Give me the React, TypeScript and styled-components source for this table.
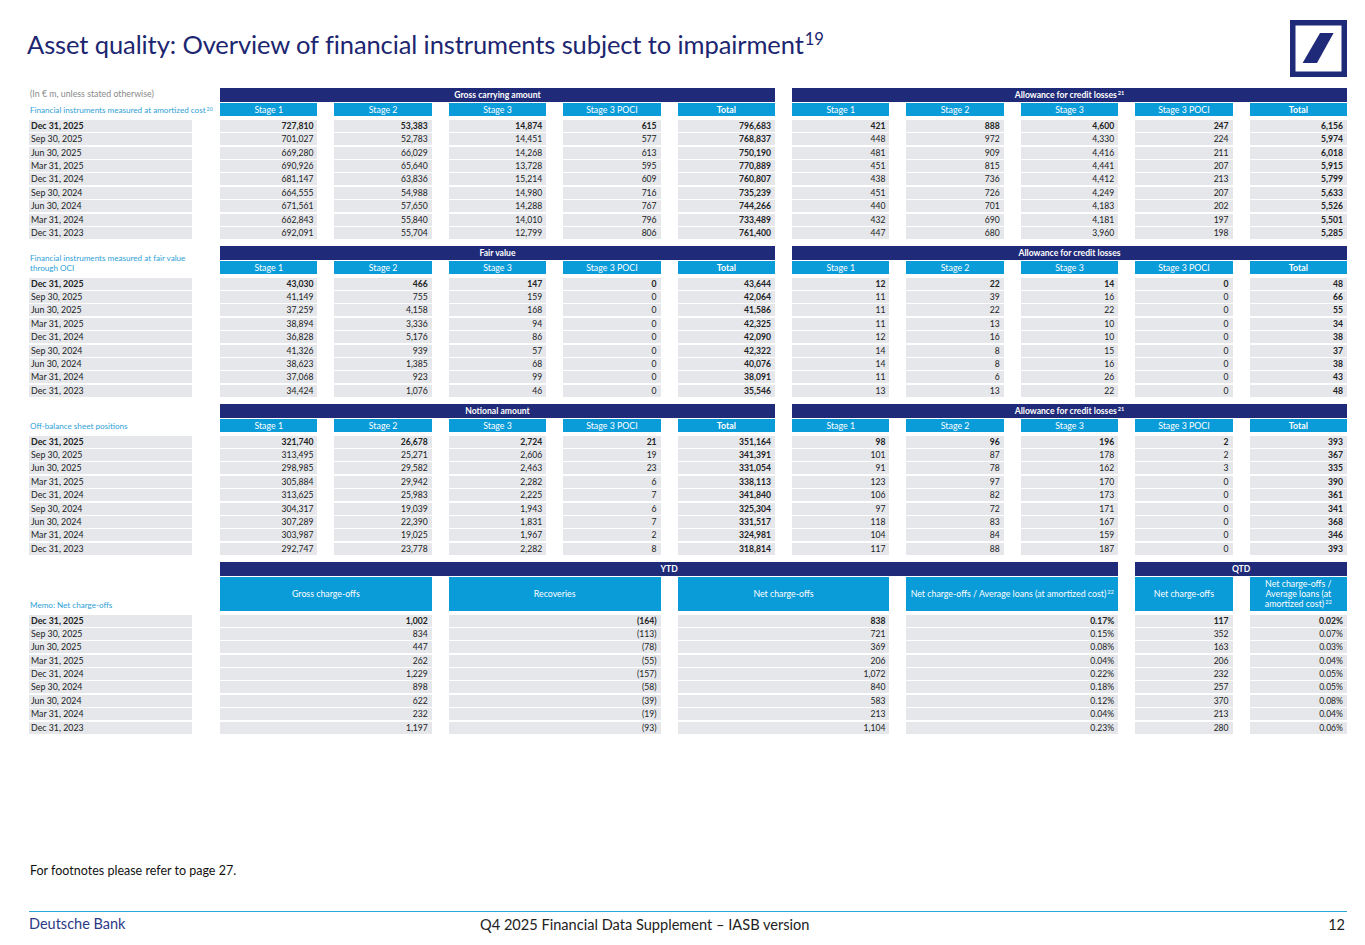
import React from "react";
import styled, { createGlobalStyle, css } from "styled-components";

const NAVY = "#1f2a78";
const SKY = "#0a9bd9";
const ROW = "#e5e7eb";
const LABEL_BLUE = "#2f9fd6";

const GlobalStyle = createGlobalStyle`
  html, body {
    margin: 0;
    padding: 0;
    background: #ffffff;
  }
  body {
    font-family: Lato, "Liberation Sans", Arial, sans-serif;
    color: #222;
  }
`;

const Page = styled.div`
  width: 1365px;
  height: 945px;
  box-sizing: border-box;
  padding: 0 18px 0 29px;
  display: flex;
  flex-direction: column;
  overflow: hidden;
`;

const Header = styled.header`
  height: 88px;
  display: flex;
  justify-content: space-between;
  align-items: flex-start;
  padding-top: 20px;
  box-sizing: border-box;
`;

const Title = styled.h1`
  margin: 9px 0 0 -2px;
  font-family: Lato, "Liberation Sans", sans-serif;
  font-weight: 400;
  font-size: 25.5px;
  line-height: 30px;
  color: #1c2670;
  letter-spacing: -0.1px;
`;

const Sup = styled.sup`
  font-size: 0.65em;
  line-height: 0;
  vertical-align: 0.55em;
  margin-left: 1px;
`;

const Logo = styled.svg`
  display: block;
  width: 57px;
  height: 57px;
`;

const Section = styled.section<{ $memo?: boolean }>`
  display: grid;
  grid-template-columns: 174px repeat(10, 1fr);
  grid-template-rows: 14px ${({ $memo }) => ($memo ? "36px" : "15px")} repeat(9, 12px);
  column-gap: 17px;
  row-gap: 1.4px;
  margin-bottom: 7px;
`;

const LabelBlock = styled.div`
  grid-column: 1;
  grid-row: 1 / span 2;
  align-self: end;
  display: flex;
  flex-direction: column;
  padding: 0 0 3px 1px;
  line-height: 10px;
  white-space: nowrap;
`;

const Note = styled.div`
  color: #8a8a8a;
  font-size: 8.8px;
  margin-bottom: 6px;
`;

const SectionName = styled.div`
  color: ${LABEL_BLUE};
  font-size: 8.1px;
`;

const GroupHead = styled.div<{ $col: number; $span: number }>`
  grid-row: 1;
  grid-column: ${({ $col, $span }) => `${$col} / span ${$span}`};
  background: ${NAVY};
  color: #fff;
  font-weight: 700;
  font-size: 8.6px;
  display: flex;
  align-items: center;
  justify-content: center;
`;

const SubHead = styled.div<{ $col: number; $span: number; $bold?: boolean; $tall?: boolean }>`
  grid-row: 2;
  grid-column: ${({ $col, $span }) => `${$col} / span ${$span}`};
  align-self: start;
  height: ${({ $tall }) => ($tall ? "34px" : "13px")};
  background: ${SKY};
  color: #fff;
  font-size: 8.8px;
  line-height: 10.4px;
  font-weight: ${({ $bold }) => ($bold ? 700 : 400)};
  display: flex;
  align-items: center;
  justify-content: center;
  text-align: center;
  padding: 0 2px;
`;

const DateCell = styled.div<{ $bold?: boolean }>`
  grid-column: 1;
  width: 163px;
  background: ${ROW};
  font-size: 8.8px;
  line-height: 12px;
  padding-left: 2px;
  box-sizing: border-box;
  color: #222;
  font-weight: ${({ $bold }) => ($bold ? 700 : 400)};
`;

const Cell = styled.div<{ $bold?: boolean; $span?: number }>`
  background: ${ROW};
  font-size: 8.6px;
  line-height: 12px;
  text-align: right;
  padding-right: 4px;
  color: #222;
  font-weight: ${({ $bold }) => ($bold ? 700 : 400)};
  ${({ $span }) =>
    $span &&
    css`
      grid-column: span ${$span};
    `}
`;

const Footer = styled.footer`
  margin-top: auto;
  padding-bottom: 12px;
`;

const FootNote = styled.div`
  font-size: 12.5px;
  line-height: 14px;
  color: #111;
  padding-left: 1px;
`;

const Divider = styled.div`
  height: 1px;
  background: #2aa8dc;
  margin: 33px 0 2px;
`;

const BottomBar = styled.div`
  display: grid;
  grid-template-columns: 451px 1fr auto;
  align-items: center;
`;

const Brand = styled.div`
  font-size: 14.5px;
  line-height: 16px;
  color: #2b3a86;
`;

const DocName = styled.div`
  font-size: 14.6px;
  line-height: 16px;
  color: #222;
  padding-top: 3px;
`;

const PageNum = styled.div`
  font-size: 14.5px;
  line-height: 16px;
  color: #222;
  padding: 3px 2px 0 0;
`;

const dates = [
  "Dec 31, 2025",
  "Sep 30, 2025",
  "Jun 30, 2025",
  "Mar 31, 2025",
  "Dec 31, 2024",
  "Sep 30, 2024",
  "Jun 30, 2024",
  "Mar 31, 2024",
  "Dec 31, 2023",
];

const stages = ["Stage 1", "Stage 2", "Stage 3", "Stage 3 POCI", "Total"];

type StageTable = {
  label: React.ReactNode;
  note?: string;
  left: React.ReactNode;
  right: React.ReactNode;
  cols: string[][];
};

const tables: StageTable[] = [
  {
    note: "(In € m, unless stated otherwise)",
    label: (
      <>
        Financial instruments measured at amortized cost<Sup>20</Sup>
      </>
    ),
    left: "Gross carrying amount",
    right: (
      <>
        Allowance for credit losses<Sup>21</Sup>
      </>
    ),
    cols: [
      ["727,810", "701,027", "669,280", "690,926", "681,147", "664,555", "671,561", "662,843", "692,091"],
      ["53,383", "52,783", "66,029", "65,640", "63,836", "54,988", "57,650", "55,840", "55,704"],
      ["14,874", "14,451", "14,268", "13,728", "15,214", "14,980", "14,288", "14,010", "12,799"],
      ["615", "577", "613", "595", "609", "716", "767", "796", "806"],
      ["796,683", "768,837", "750,190", "770,889", "760,807", "735,239", "744,266", "733,489", "761,400"],
      ["421", "448", "481", "451", "438", "451", "440", "432", "447"],
      ["888", "972", "909", "815", "736", "726", "701", "690", "680"],
      ["4,600", "4,330", "4,416", "4,441", "4,412", "4,249", "4,183", "4,181", "3,960"],
      ["247", "224", "211", "207", "213", "207", "202", "197", "198"],
      ["6,156", "5,974", "6,018", "5,915", "5,799", "5,633", "5,526", "5,501", "5,285"],
    ],
  },
  {
    label: (
      <>
        Financial instruments measured at fair value
        <br />
        through OCI
      </>
    ),
    left: "Fair value",
    right: "Allowance for credit losses",
    cols: [
      ["43,030", "41,149", "37,259", "38,894", "36,828", "41,326", "38,623", "37,068", "34,424"],
      ["466", "755", "4,158", "3,336", "5,176", "939", "1,385", "923", "1,076"],
      ["147", "159", "168", "94", "86", "57", "68", "99", "46"],
      ["0", "0", "0", "0", "0", "0", "0", "0", "0"],
      ["43,644", "42,064", "41,586", "42,325", "42,090", "42,322", "40,076", "38,091", "35,546"],
      ["12", "11", "11", "11", "12", "14", "14", "11", "13"],
      ["22", "39", "22", "13", "16", "8", "8", "6", "13"],
      ["14", "16", "22", "10", "10", "15", "16", "26", "22"],
      ["0", "0", "0", "0", "0", "0", "0", "0", "0"],
      ["48", "66", "55", "34", "38", "37", "38", "43", "48"],
    ],
  },
  {
    label: "Off-balance sheet positions",
    left: "Notional amount",
    right: (
      <>
        Allowance for credit losses<Sup>21</Sup>
      </>
    ),
    cols: [
      ["321,740", "313,495", "298,985", "305,884", "313,625", "304,317", "307,289", "303,987", "292,747"],
      ["26,678", "25,271", "29,582", "29,942", "25,983", "19,039", "22,390", "19,025", "23,778"],
      ["2,724", "2,606", "2,463", "2,282", "2,225", "1,943", "1,831", "1,967", "2,282"],
      ["21", "19", "23", "6", "7", "6", "7", "2", "8"],
      ["351,164", "341,391", "331,054", "338,113", "341,840", "325,304", "331,517", "324,981", "318,814"],
      ["98", "101", "91", "123", "106", "97", "118", "104", "117"],
      ["96", "87", "78", "97", "82", "72", "83", "84", "88"],
      ["196", "178", "162", "170", "173", "171", "167", "159", "187"],
      ["2", "2", "3", "0", "0", "0", "0", "0", "0"],
      ["393", "367", "335", "390", "361", "341", "368", "346", "393"],
    ],
  },
];

const memoCols: { head: React.ReactNode; span: number; values: string[] }[] = [
  { head: "Gross charge-offs", span: 2, values: ["1,002", "834", "447", "262", "1,229", "898", "622", "232", "1,197"] },
  { head: "Recoveries", span: 2, values: ["(164)", "(113)", "(78)", "(55)", "(157)", "(58)", "(39)", "(19)", "(93)"] },
  { head: "Net charge-offs", span: 2, values: ["838", "721", "369", "206", "1,072", "840", "583", "213", "1,104"] },
  {
    head: (
      <>
        Net charge-offs / Average loans (at amortized cost)<Sup>22</Sup>
      </>
    ),
    span: 2,
    values: ["0.17%", "0.15%", "0.08%", "0.04%", "0.22%", "0.18%", "0.12%", "0.04%", "0.23%"],
  },
  { head: "Net charge-offs", span: 1, values: ["117", "352", "163", "206", "232", "257", "370", "213", "280"] },
  {
    head: (
      <>
        Net charge-offs /<br />
        Average loans (at
        <br />
        amortized cost)<Sup>22</Sup>
      </>
    ),
    span: 1,
    values: ["0.02%", "0.07%", "0.03%", "0.04%", "0.05%", "0.05%", "0.08%", "0.04%", "0.06%"],
  },
];

function StageSection({ t }: { t: StageTable }) {
  return (
    <Section>
      <LabelBlock>
        {t.note && <Note>{t.note}</Note>}
        <SectionName>{t.label}</SectionName>
      </LabelBlock>
      <GroupHead $col={2} $span={5}>
        <span>{t.left}</span>
      </GroupHead>
      <GroupHead $col={7} $span={5}>
        <span>{t.right}</span>
      </GroupHead>
      {[...stages, ...stages].map((s, i) => (
        <SubHead key={i} $col={i + 2} $span={1} $bold={s === "Total"}>
          {s}
        </SubHead>
      ))}
      {dates.map((d, r) => (
        <React.Fragment key={d}>
          <DateCell $bold={r === 0}>{d}</DateCell>
          {t.cols.map((col, c) => (
            <Cell key={c} $bold={r === 0 || c === 4 || c === 9}>
              {col[r]}
            </Cell>
          ))}
        </React.Fragment>
      ))}
    </Section>
  );
}

function MemoSection() {
  let col = 2;
  const heads = memoCols.map((m, i) => {
    const el = (
      <SubHead key={i} $col={col} $span={m.span} $tall>
        <span>{m.head}</span>
      </SubHead>
    );
    col += m.span;
    return el;
  });
  return (
    <Section $memo>
      <LabelBlock>
        <SectionName>Memo: Net charge-offs</SectionName>
      </LabelBlock>
      <GroupHead $col={2} $span={8}>YTD</GroupHead>
      <GroupHead $col={10} $span={2}>QTD</GroupHead>
      {heads}
      {dates.map((d, r) => (
        <React.Fragment key={d}>
          <DateCell $bold={r === 0}>{d}</DateCell>
          {memoCols.map((m, c) => (
            <Cell key={c} $span={m.span > 1 ? m.span : undefined} $bold={r === 0}>
              {m.values[r]}
            </Cell>
          ))}
        </React.Fragment>
      ))}
    </Section>
  );
}

export default function App() {
  return (
    <>
      <GlobalStyle />
      <Page>
        <Header>
          <Title>
            Asset quality: Overview of financial instruments subject to impairment<Sup>19</Sup>
          </Title>
          <Logo viewBox="0 0 57 57" aria-label="Deutsche Bank logo">
            <rect x="0" y="0" width="57" height="57" fill={NAVY} />
            <rect x="5.5" y="5.5" width="46" height="46" fill="#fff" />
            <polygon points="30,13 43.6,13 27,43 12.6,43" fill={NAVY} />
          </Logo>
        </Header>

        {tables.map((t, i) => (
          <StageSection key={i} t={t} />
        ))}
        <MemoSection />

        <Footer>
          <FootNote>For footnotes please refer to page 27.</FootNote>
          <Divider />
          <BottomBar>
            <Brand>Deutsche Bank</Brand>
            <DocName>Q4 2025 Financial Data Supplement – IASB version</DocName>
            <PageNum>12</PageNum>
          </BottomBar>
        </Footer>
      </Page>
    </>
  );
}
